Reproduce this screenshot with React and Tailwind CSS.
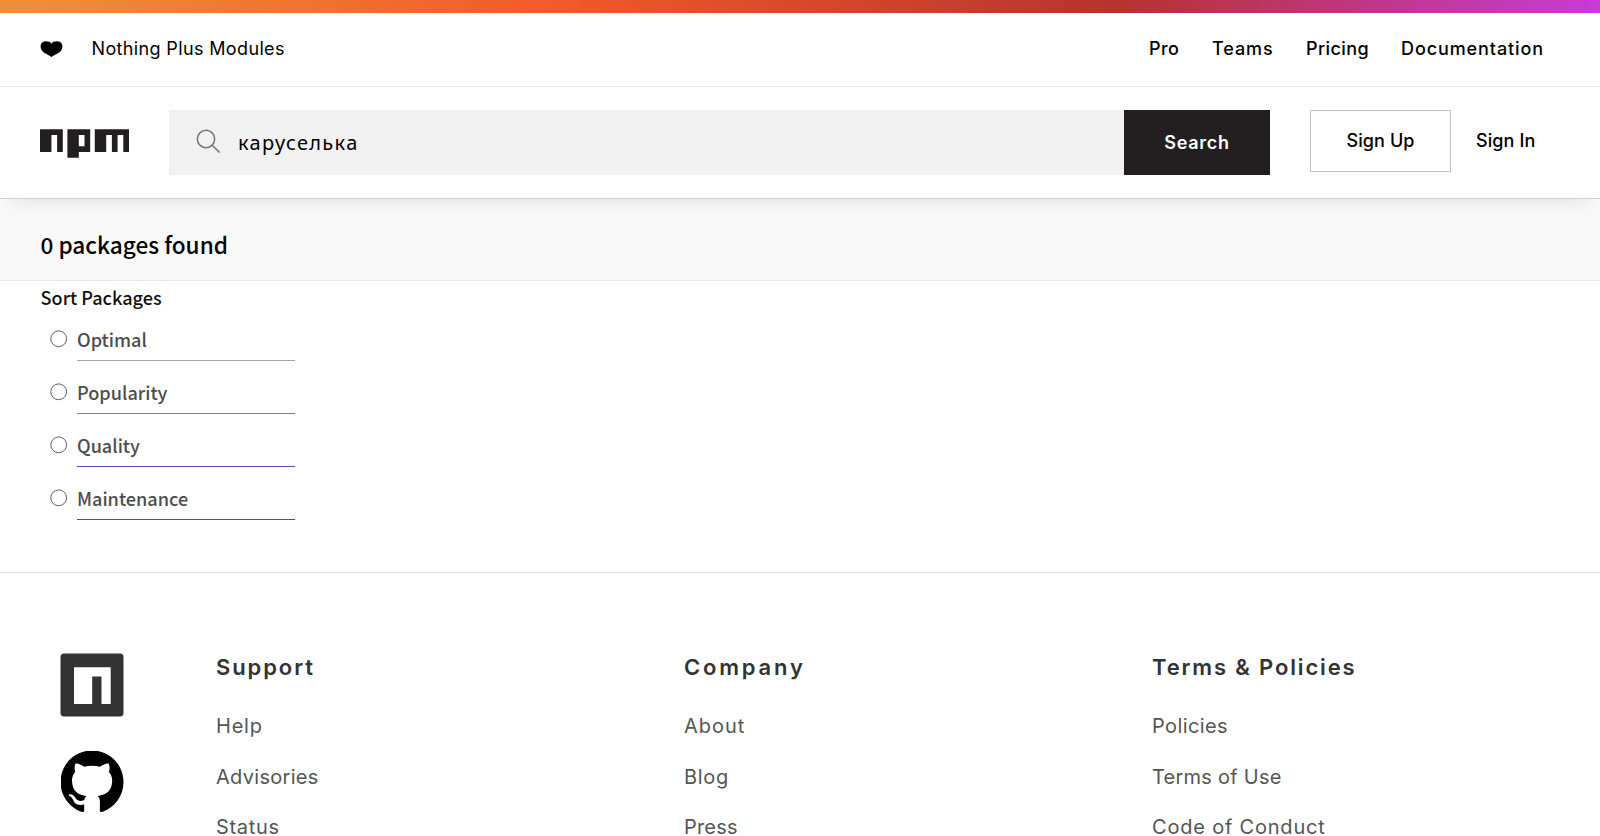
import React from "react";

const sorts = [
  ["Optimal", "border-[#a6a6a6]"],
  ["Popularity", "border-[#3f97ca]"],
  ["Quality", "border-[#6846c9]"],
  ["Maintenance", "border-[#b0303a]"],
];

const columns = [
  {
    title: "Support",
    track: "tracking-[1.9px]",
    links: [["Help", "tracking-[0.8px]"], ["Advisories", "tracking-[0.3px]"], ["Status", "tracking-[0.7px]"]],
  },
  {
    title: "Company",
    track: "tracking-[2.8px]",
    links: [["About", "tracking-[1px]"], ["Blog", "tracking-[0.7px]"], ["Press", "tracking-[0.2px]"]],
  },
  {
    title: "Terms & Policies",
    track: "tracking-[1.850px]",
    links: [["Policies", "tracking-[0.4px]"], ["Terms of Use", "tracking-[0.250px]"], ["Code of Conduct", "tracking-[0.8px]"]],
  },
];

function Heart() {
  return (
    <svg className="mr-[28.500px] h-4 w-[23px]" viewBox="0 0 23 16">
      <path d="M11.500 15.900C9.300 13.900 5.800 13 3.200 10.900 1.100 9.200.300 6.700.700 4.300 1.200 1.800 3.300.300 6 .300 8.600.300 10.500 1 11.500 2.800 12.500 1 14.400.300 17 .300 19.700.300 21.800 1.800 22.300 4.300 22.700 6.700 21.900 9.200 19.800 10.900 17.200 13 13.700 13.900 11.500 15.900z" />
    </svg>
  );
}

function Wordmark() {
  return (
    <svg className="mr-10 mt-[2px] h-[29px] w-[89px]" viewBox="0 0 780 250" fill="#231f20">
      <path d="M240 250h100v-50h100V0H240v250zM340 50h50v100h-50V50zM480 0v200h100V50h50v150h50V50h50v150h50V0H480zM0 200h100V50h50v150h50V0H0v200z" />
    </svg>
  );
}

export default function App() {
  return (
    <div className="h-[836px] w-[1600px] overflow-hidden whitespace-nowrap bg-white font-['Inter',sans-serif] text-black">
      <div className="h-[13px] bg-[linear-gradient(90deg,#ee9139_0%,#f15a29_35%,#b5332e_70%,#c83bd8_100%)]" />
      <nav className="flex h-[74px] items-center border-b border-[#e6e6e6] pb-[2px] pl-10 text-[18px]">
        <Heart />
        <span className="tracking-[0.360px]">Nothing Plus Modules</span>
        <div className="ml-auto flex w-[451px] font-medium">
          <span className="w-[63px] tracking-[0.4px]">Pro</span>
          <span className="w-[94px] tracking-[0.9px]">Teams</span>
          <span className="w-[95px] tracking-[0.4px]">Pricing</span>
          <span className="tracking-[0.9px]">Documentation</span>
        </div>
      </nav>

      <header className="relative z-10 flex h-[112px] items-center border-b border-[#cfcfcf] bg-white pl-10 text-[18px] shadow-[0_12px_18px_-10px_rgba(0,0,0,0.1)]">
        <Wordmark />
        <div className="flex h-[65px] w-[955px] items-center bg-[#f1f1f1] pl-[27px]">
          <svg className="mb-[3px] mr-[18px] size-6" viewBox="0 0 24 24" fill="none" stroke="#777" strokeWidth="1.500">
            <circle cx="10" cy="10" r="8.700" />
            <path d="M16.200 16.200l7.300 7.200" />
          </svg>
          <span className="font-['Noto_Sans',sans-serif] text-[20px] tracking-[1.350px]">каруселька</span>
        </div>
        <div className="flex h-[65px] w-[146px] items-center justify-center bg-[#231f20] font-semibold tracking-[0.7px] text-white">Search</div>
        <div className="mb-1 ml-10 flex h-[62px] w-[141px] items-center justify-center border border-[#c4c4c4] font-medium tracking-[0.1px]">Sign Up</div>
        <span className="mb-1 ml-[25px] font-medium tracking-[0.1px]">Sign In</span>
      </header>

      <main className="font-['Noto_Sans_CJK_SC',sans-serif]">
        <div className="flex h-[82px] items-center border-b border-[#e6e6e6] bg-[#f9f9f9] pl-[40.500px] pt-[10px] text-[22.600px] font-medium">0 packages found</div>
        <h3 className="h-[27px] pl-[40.500px] text-[18.100px] font-medium leading-[32px] text-[#111]">Sort Packages</h3>
        {sorts.map(([name, color]) => (
          <div key={name} className="flex h-[53px] pl-[49.600px]">
            <svg className="mr-[9.400px] mt-[22px] size-[18px]" viewBox="0 0 18 18" fill="none" stroke="#5f5f5f">
              <circle cx="8.700" cy="8.800" r="7.900" />
            </svg>
            <div className={`w-[218px] border-b pt-[19px] text-[18.100px] font-medium leading-6 text-[#4d4d4d] ${color}`}>{name}</div>
          </div>
        ))}
      </main>

      <footer className="mt-[52px] flex border-t border-[#e6e6e6] pt-[80px]">
        <div className="flex w-[216px] shrink-0 flex-col gap-[33px] pl-[60px]">
          <svg className="size-16" viewBox="0 0 64 64">
            <rect x=".5" y=".5" width="63" height="63" rx="3.500" fill="#333" />
            <path fill="#fff" d="M14 14.300h36.700v36.700h-9.200V23.500h-9.300V51H14z" />
          </svg>
          <svg className="size-16 p-[0.500px]" viewBox="0 0 16 16">
            <path d="M8 0C3.580 0 0 3.580 0 8c0 3.540 2.290 6.530 5.470 7.590.4.070.55-.17.55-.38 0-.19-.01-.82-.01-1.490-2.010.37-2.530-.49-2.690-.94-.09-.23-.48-.94-.82-1.130-.28-.15-.68-.52-.01-.53.63-.01 1.080.58 1.230.82.72 1.210 1.870.87 2.330.66.07-.52.28-.87.51-1.070-1.780-.2-3.640-.89-3.640-3.950 0-.87.31-1.590.82-2.150-.08-.2-.36-1.020.08-2.120 0 0 .67-.21 2.200.82.64-.18 1.320-.27 2-.27s1.360.09 2 .27c1.530-1.040 2.200-.82 2.200-.82.44 1.100.16 1.920.08 2.120.51.56.82 1.270.82 2.150 0 3.070-1.870 3.750-3.650 3.950.29.25.54.73.54 1.480 0 1.070-.01 1.930-.01 2.200 0 .21.15.46.55.38A8.010 8.010 0 0 0 16 8c0-4.420-3.580-8-8-8z" />
          </svg>
        </div>
        {columns.map((c) => (
          <div key={c.title} className="w-[468px] shrink-0">
            <h4 className={`mb-[34px] h-[28px] text-[22px] font-semibold leading-[28px] text-[#333] ${c.track}`}>{c.title}</h4>
            {c.links.map(([l, t]) => (
              <div key={l} className={`h-[50.500px] text-[20px] leading-[22px] text-[#555] ${t}`}>{l}</div>
            ))}
          </div>
        ))}
      </footer>
    </div>
  );
}
